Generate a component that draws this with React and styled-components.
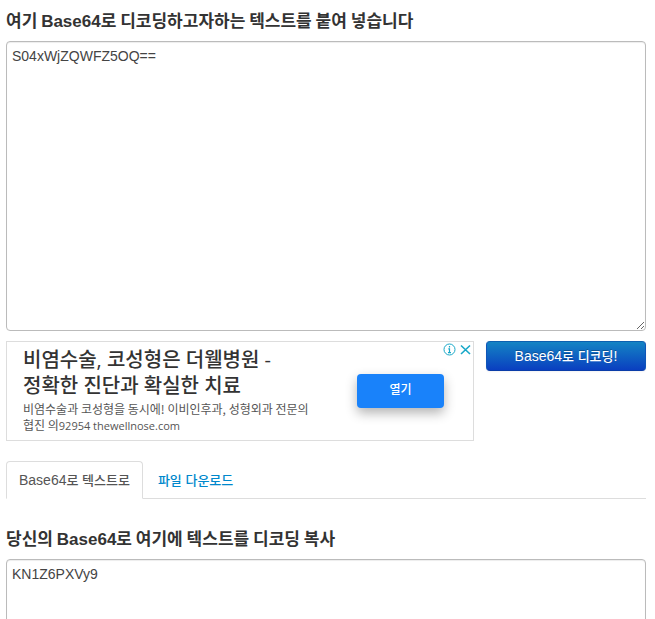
import React from "react"
import styled, { createGlobalStyle } from "styled-components"

const GlobalStyle = createGlobalStyle`
  * {
    box-sizing: border-box;
  }

  html {
    scrollbar-width: none;
  }

  body {
    margin: 0;
    background: #ffffff;
    color: #333333;
    font-family: "Liberation Sans", "Noto Sans CJK KR", sans-serif;
    font-size: 14px;
    line-height: 20px;
  }
`

const Page = styled.main`
  padding: 11px 9px 10px 6px;
`

const FieldLabel = styled.label`
  display: block;
  margin-bottom: 9px;
  font-size: 17px;
  font-weight: bold;
  line-height: 20px;
`

const HeadingHangul = styled.span`
  font-family: "Noto Sans CJK KR", sans-serif;
  line-height: 1;
`

const Hangul = styled.span`
  font-size: 13px;
  font-weight: 500;
  line-height: 1;
`

const TextBox = styled.textarea`
  display: block;
  width: 100%;
  height: 290px;
  padding: 4px 5px;
  border: 1px solid #bbbbbb;
  border-radius: 4px;
  background: #ffffff;
  box-shadow: inset 0 1px 1px rgba(0, 0, 0, 0.075);
  color: #444444;
  font: inherit;
  outline: none;
  resize: both;
`

const ActionRow = styled.div`
  display: flex;
  align-items: flex-start;
  gap: 12px;
  margin: 10px 0 20px;
`

const DecodeButton = styled.button`
  flex: 1;
  height: 30px;
  padding: 0;
  border: 1px solid #0f5bb0;
  border-color: #0c60b0 #0f55b8 #0a3ca8;
  border-radius: 4px;
  background: linear-gradient(to bottom, #1484c4, #0a3fc0);
  box-shadow: 0 1px 2px rgba(0, 0, 0, 0.05);
  color: #ffffff;
  font: inherit;
  text-shadow: 0 -1px 0 rgba(0, 0, 0, 0.25);
  cursor: pointer;
`

const Ad = styled.aside`
  position: relative;
  display: flex;
  flex: 0 1 468px;
  align-items: flex-start;
  justify-content: space-between;
  height: 100px;
  padding: 5px 29px 0 16px;
  border: 1px solid #dddddd;
`

const AdTitle = styled.div`
  font-family: "Open Sans", "Noto Sans CJK KR", sans-serif;
  font-size: 20px;
  font-weight: 500;
  line-height: 26px;
`

const AdText = styled.div`
  margin-top: 2px;
  color: #555555;
  font-family: "Noto Sans CJK KR", sans-serif;
  font-size: 12px;
  line-height: 16px;
`

const AdDomain = styled.span`
  font-family: "Open Sans", sans-serif;
  font-size: 11px;
  line-height: 1;
`

const AdButton = styled.button`
  width: 87px;
  height: 34px;
  margin-top: 27px;
  padding: 0 0 5px;
  border: 0;
  border-radius: 4px;
  background: #1982fa;
  box-shadow: 0 5px 12px rgba(0, 0, 0, 0.3);
  color: #ffffff;
  font-family: "Noto Sans CJK KR", sans-serif;
  font-size: 12px;
  font-weight: 500;
  cursor: pointer;
`

const AdControls = styled.div`
  position: absolute;
  top: 1px;
  right: 1px;
  display: flex;
  gap: 2px;
`

const AdControl = styled.button`
  display: flex;
  padding: 0;
  border: 0;
  background: none;
  color: #18a8c8;
  cursor: pointer;
`

const Tabs = styled.nav`
  display: flex;
  margin-bottom: 30px;
  border-bottom: 1px solid #dddddd;
`

const Tab = styled.a`
  margin: 0 2px -1px 0;
  padding: 8px 12px;
  border: 1px solid ${({ $active }) => ($active ? "#dddddd" : "transparent")};
  border-bottom-color: ${({ $active }) => ($active ? "#ffffff" : "transparent")};
  border-radius: 4px 4px 0 0;
  color: ${({ $active }) => ($active ? "#555555" : "#0088cc")};
  text-decoration: none;
`

const App = () => {
  return (
    <>
      <GlobalStyle />
      <Page>
        <FieldLabel htmlFor="encoded">
          <HeadingHangul>여기 </HeadingHangul>
          Base64
          <HeadingHangul>로 디코딩하고자하는 텍스트를 붙여 넣습니다</HeadingHangul>
        </FieldLabel>
        <TextBox id="encoded" spellCheck={false} defaultValue="S04xWjZQWFZ5OQ==" />
        <ActionRow>
          <Ad>
            <div>
              <AdTitle>
                비염수술, 코성형은 더웰병원 -
                <br />
                정확한 진단과 확실한 치료
              </AdTitle>
              <AdText>
                비염수술과 코성형을 동시에! 이비인후과, 성형외과 전문의
                <br />
                협진 의<AdDomain>92954 thewellnose.com</AdDomain>
              </AdText>
            </div>
            <AdButton type="button">열기</AdButton>
            <AdControls>
              <AdControl type="button" aria-label="광고 정보">
                <svg width="14" height="14" viewBox="0 0 14 14" fill="none" stroke="currentColor">
                  <circle cx="7.5" cy="6.5" r="5.5" />
                  <path d="M7.5 3v1.4M6.3 5.8h1.2v4M6 9.6h3" strokeWidth="1.2" />
                </svg>
              </AdControl>
              <AdControl type="button" aria-label="광고 닫기">
                <svg width="14" height="14" viewBox="0 0 14 14" fill="none" stroke="currentColor">
                  <path d="M3 2.5l9 8.5M12 2.5l-9 8.5" strokeWidth="1.6" />
                </svg>
              </AdControl>
            </AdControls>
          </Ad>
          <DecodeButton type="button">
            Base64<Hangul>로 디코딩</Hangul>!
          </DecodeButton>
        </ActionRow>
        <Tabs>
          <Tab href="#text" $active>
            Base64<Hangul>로 텍스트로</Hangul>
          </Tab>
          <Tab href="#download">
            <Hangul>파일 다운로드</Hangul>
          </Tab>
        </Tabs>
        <FieldLabel htmlFor="decoded">
          <HeadingHangul>당신의 </HeadingHangul>
          Base64
          <HeadingHangul>로 여기에 텍스트를 디코딩 복사</HeadingHangul>
        </FieldLabel>
        <TextBox id="decoded" spellCheck={false} defaultValue="KN1Z6PXVy9" />
      </Page>
    </>
  )
}

export default App
